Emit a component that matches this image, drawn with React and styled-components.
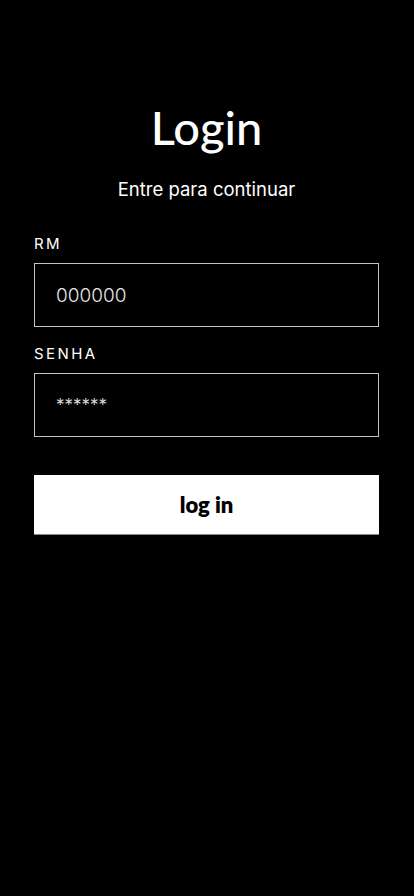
import styled, { createGlobalStyle } from 'styled-components';

const GlobalStyle = createGlobalStyle`
  html, body {
    margin: 0;
    padding: 0;
    background: #000;
  }
  * {
    box-sizing: border-box;
  }
`;

const Page = styled.div`
  min-height: 896px;
  background: #000;
  color: #fff;
  padding: 99px 35px 0 34px;
  font-family: Inter, "Noto Sans", sans-serif;
`;

const Title = styled.h1`
  margin: 0;
  text-align: center;
  font-family: Lato, "Noto Sans", sans-serif;
  font-weight: 500;
  font-size: 47px;
  line-height: 56px;
`;

const Subtitle = styled.p`
  margin: 22px 0 0 0;
  text-align: center;
  font-size: 18.5px;
  line-height: 24px;
  font-weight: 400;
`;

const Form = styled.form`
  margin-top: 33px;
  display: flex;
  flex-direction: column;
`;

const Field = styled.div`
  display: flex;
  flex-direction: column;
  margin-bottom: ${p => p.$last ? '38px' : '17px'};
`;

const Label = styled.label`
  font-size: 15px;
  line-height: 20px;
  letter-spacing: 2.4px;
  margin-bottom: 9px;
`;

const Input = styled.input`
  height: 64px;
  width: 100%;
  background: #000;
  border: 1px solid #c4c4c4;
  border-radius: 0;
  padding: 0 21px;
  color: #fff;
  font-family: Inter, "Noto Sans", sans-serif;
  font-weight: 300;
  font-size: ${p => p.$stars ? '17px' : '19px'};
  letter-spacing: 0;
  outline: none;
  &::placeholder {
    color: #e6e6e6;
  }
`;

const Button = styled.button`
  height: 60px;
  width: 100%;
  background: #fff;
  border: none;
  border-bottom: 1px solid #888;
  color: #000;
  font-family: Lato, "Noto Sans", sans-serif;
  font-weight: 800;
  font-size: 22px;
  cursor: pointer;
`;

export default function App() {
  return (
    <>
      <GlobalStyle />
      <Page>
        <Title>Login</Title>
        <Subtitle>Entre para continuar</Subtitle>
        <Form onSubmit={e => e.preventDefault()}>
          <Field>
            <Label>RM</Label>
            <Input placeholder="000000" />
          </Field>
          <Field $last>
            <Label>SENHA</Label>
            <Input $stars type="password" placeholder="******" />
          </Field>
          <Button type="submit">log in</Button>
        </Form>
      </Page>
    </>
  );
}
